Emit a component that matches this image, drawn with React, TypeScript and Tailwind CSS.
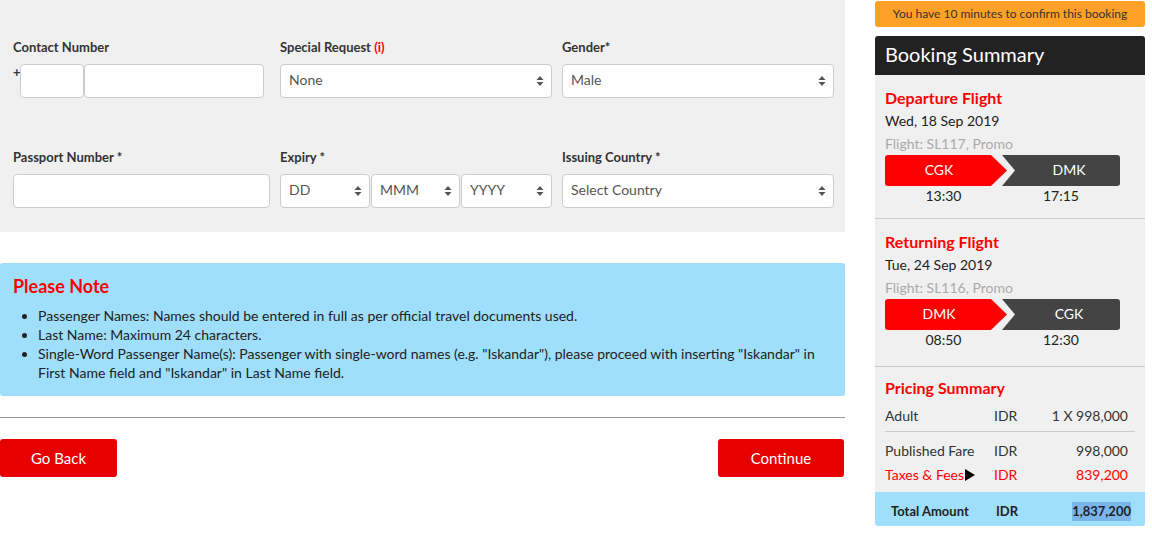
import React from 'react'

const FONT = "font-['Lato','Noto_Sans',sans-serif]"

function Arrows() {
  return (
    <svg width="8" height="12" viewBox="0 0 8 12" className="absolute right-[7px] top-1/2 -translate-y-1/2">
      <path d="M4 1 L7.5 5 L0.5 5 Z" fill="#555" />
      <path d="M4 11 L7.5 7 L0.5 7 Z" fill="#555" />
    </svg>
  )
}

function SelectBox({ value, className = '' }: { value: string; className?: string }) {
  return (
    <div className={`relative h-[34px] bg-white border border-[#ccc] rounded-[4px] flex items-center pl-[8px] pb-[3px] text-[14px] text-[#555] ${className}`}>
      {value}
      <Arrows />
    </div>
  )
}

function Label({ children }: { children: React.ReactNode }) {
  return <div className="text-[13px] font-bold text-[#333] leading-[18px]">{children}</div>
}

function Route({ from, to, dep, arr }: { from: string; to: string; dep: string; arr: string }) {
  return (
    <div>
      <div className="flex h-[31px] text-white text-[14px]">
        <div className="w-[122px] bg-[#ff0000] rounded-l-[3px] flex items-center justify-center pr-[14px] pb-[2px] [clip-path:polygon(0_0,calc(100%-16px)_0,100%_50%,calc(100%-16px)_100%,0_100%)]">
          {from}
        </div>
        <div className="ml-[-5px] flex-1 mr-[15px] bg-[#444] rounded-r-[3px] flex items-center justify-center pl-[16px] pb-[2px] [clip-path:polygon(0_0,100%_0,100%_100%,0_100%,13px_50%)]">
          {to}
        </div>
      </div>
      <div className="flex text-[14px] text-[#222] leading-[20px]">
        <div className="w-[117px] text-center">{dep}</div>
        <div className="w-[118px] text-center">{arr}</div>
      </div>
    </div>
  )
}

export default function App() {
  return (
    <div className={`${FONT} w-[1152px] h-[538px] bg-white flex overflow-hidden`}>
      {/* main column */}
      <div className="w-[845px] flex flex-col">
        <div className="bg-[#f0f0f0] pt-[38px] pb-[24px] pl-[13px]">
          <div className="grid grid-cols-[257px_272px_272px] gap-x-[10px]">
            <div>
              <Label>Contact Number</Label>
              <div className="flex mt-[8px] relative">
                <span className="text-[13px] font-bold text-[#333] w-[7px] leading-[14px] mt-[1px]">+</span>
                <div className="w-[64px] h-[34px] bg-white border border-[#ccc] rounded-[4px]" />
                <div className="w-[180px] h-[34px] bg-white border border-[#ccc] rounded-[4px]" />
              </div>
            </div>
            <div>
              <Label>
                Special Request <span className="text-[#f00]">(i)</span>
              </Label>
              <SelectBox value="None" className="mt-[8px]" />
            </div>
            <div>
              <Label>Gender*</Label>
              <SelectBox value="Male" className="mt-[8px]" />
            </div>

            <div className="mt-[50px]">
              <Label>Passport Number *</Label>
              <div className="mt-[8px] h-[34px] bg-white border border-[#ccc] rounded-[4px]" />
            </div>
            <div className="mt-[50px]">
              <Label>Expiry *</Label>
              <div className="mt-[8px] flex gap-[1px]">
                <SelectBox value="DD" className="w-[90px]" />
                <SelectBox value="MMM" className="w-[89px]" />
                <SelectBox value="YYYY" className="w-[91px]" />
              </div>
            </div>
            <div className="mt-[50px]">
              <Label>Issuing Country *</Label>
              <SelectBox value="Select Country" className="mt-[8px]" />
            </div>
          </div>
        </div>

        <div className="mt-[31px] bg-[#9fdffb] rounded-[3px] pt-[11px] pb-[14px] pl-[13px] pr-[13px]">
          <div className="text-[18px] font-bold text-[#f00] leading-[24px]">Please Note</div>
          <ul className="mt-[8px] list-disc pl-[25px] text-[14px] text-[#222] leading-[19px]">
            <li>Passenger Names: Names should be entered in full as per official travel documents used.</li>
            <li>Last Name: Maximum 24 characters.</li>
            <li>
              Single-Word Passenger Name(s): Passenger with single-word names (e.g. "Iskandar"), please proceed with inserting "Iskandar" in
              <br />
              First Name field and "Iskandar" in Last Name field.
            </li>
          </ul>
        </div>

        <div className="mt-[21px] h-px bg-[#999]" />

        <div className="mt-[21px] flex justify-between">
          <button className="w-[117px] h-[38px] bg-[#e60000] text-white text-[15px] rounded-[3px]">Go Back</button>
          <button className="w-[126px] h-[38px] bg-[#e60000] text-white text-[15px] rounded-[3px] mr-px">Continue</button>
        </div>
      </div>

      {/* sidebar */}
      <div className="ml-[30px] w-[270px] pt-px">
        <div className="h-[26px] bg-[#ffa126] rounded-[3px] flex items-center justify-center text-[12px] text-[#333]">
          You have 10 minutes to confirm this booking
        </div>
        <div className="mt-[9px] h-[39px] bg-[#222] rounded-t-[3px] flex items-center pl-[10px] pb-[4px] text-white text-[20px]">
          Booking Summary
        </div>

        <div className="bg-[#f0f0f0] px-[10px] pt-[11px] pb-[12px] border-b border-[#ccc]">
          <div className="text-[16px] font-bold text-[#f00] leading-[24px]">Departure Flight</div>
          <div className="text-[14px] text-[#222] leading-[22px]">Wed, 18 Sep 2019</div>
          <div className="text-[14px] text-[#aaa] leading-[23px]">Flight: SL117, Promo</div>
          <Route from="CGK" to="DMK" dep="13:30" arr="17:15" />
        </div>

        <div className="bg-[#f0f0f0] px-[10px] pt-[11px] pb-[16px] border-b border-[#ccc]">
          <div className="text-[16px] font-bold text-[#f00] leading-[24px]">Returning Flight</div>
          <div className="text-[14px] text-[#222] leading-[22px]">Tue, 24 Sep 2019</div>
          <div className="text-[14px] text-[#aaa] leading-[23px]">Flight: SL116, Promo</div>
          <Route from="DMK" to="CGK" dep="08:50" arr="12:30" />
        </div>

        <div className="bg-[#f0f0f0] px-[10px] pt-[9px] pb-[5px] text-[14px] leading-[24px]">
          <div className="text-[16px] font-bold text-[#f00]">Pricing Summary</div>
          <div className="mt-[4px] pb-[3px] border-b border-[#ccc] flex text-[#333]">
            <span className="w-[109px]">Adult</span>
            <span>IDR</span>
            <span className="ml-auto pr-[7px]">1 X 998,000</span>
          </div>
          <div className="mt-[7px] flex text-[#333]">
            <span className="w-[109px]">Published Fare</span>
            <span>IDR</span>
            <span className="ml-auto pr-[7px]">998,000</span>
          </div>
          <div className="flex text-[#f00]">
            <span className="w-[109px] flex items-center">
              Taxes &amp; Fees
              <svg width="10" height="12" viewBox="0 0 10 12" className="ml-px">
                <path d="M0 0 L10 6 L0 12 Z" fill="#000" />
              </svg>
            </span>
            <span>IDR</span>
            <span className="ml-auto pr-[7px]">839,200</span>
          </div>
        </div>

        <div className="h-[34px] bg-[#9fdffb] rounded-b-[3px] flex items-center pl-[16px] pr-[14px] pt-[5px] text-[13px] font-bold text-[#222]">
          <span className="w-[105px]">Total Amount</span>
          <span>IDR</span>
          <span className="ml-auto bg-[#7ab6ec]">1,837,200</span>
        </div>
      </div>
    </div>
  )
}
